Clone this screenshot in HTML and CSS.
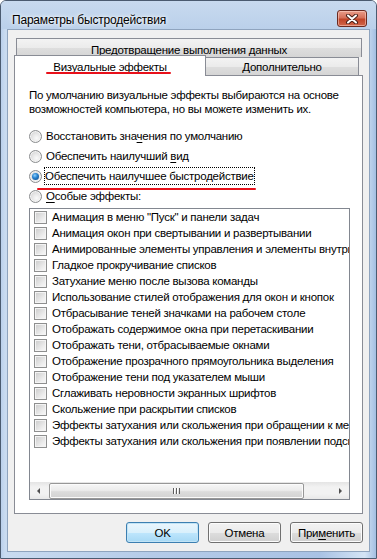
FILE: index.html
```html
<!DOCTYPE html>
<html>
<head lang="ru">
    <meta charset="UTF-8">
    <title>Параметры быстродействия</title>
    <link rel="stylesheet" href="styles.css">
</head>
<body>
<div class="window">
    <div class="titlebar">
        <span class="title">Параметры быстродействия</span>
        <span class="close">
            <svg width="16" height="10" viewBox="0 0 16 10">
                <path d="M4 1.5 L12 8.5 M12 1.5 L4 8.5" stroke="#4a1f18" stroke-width="4" stroke-linecap="round"/>
                <path d="M4 1.5 L12 8.5 M12 1.5 L4 8.5" stroke="#fff" stroke-width="2" stroke-linecap="round"/>
            </svg>
        </span>
    </div>
    <div class="client">
        <div class="tabs">
            <div class="tab-row">
                <div class="tab tab-back">Предотвращение выполнения данных</div>
            </div>
            <div class="tab-row tab-row-front">
                <div class="tab tab-active"><span class="mark">Визуальные эффекты</span></div>
                <div class="tab tab-other">Дополнительно</div>
            </div>
        </div>
        <div class="panel">
            <p class="intro">По умолчанию визуальные эффекты выбираются на основе возможностей компьютера, но вы можете изменить их.</p>
            <div class="options">
                <div class="option"><span class="radio"></span><span>Восстановить зна<u>ч</u>ения по умолчанию</span></div>
                <div class="option"><span class="radio"></span><span>Обеспечить наилучший <u>в</u>ид</span></div>
                <div class="option"><span class="radio checked"></span><span class="focus mark-line">Обеспечить наилучшее быстродействие</span></div>
                <div class="option"><span class="radio"></span><span><u>О</u>собые эффекты:</span></div>
            </div>
            <div class="list">
                <div class="list-rows">
                    <div class="item"><span class="check"></span>Анимация в меню "Пуск" и панели задач</div>
                    <div class="item"><span class="check"></span>Анимация окон при свертывании и развертывании</div>
                    <div class="item"><span class="check"></span>Анимированные элементы управления и элементы внутри окна</div>
                    <div class="item"><span class="check"></span>Гладкое прокручивание списков</div>
                    <div class="item"><span class="check"></span>Затухание меню после вызова команды</div>
                    <div class="item"><span class="check"></span>Использование стилей отображения для окон и кнопок</div>
                    <div class="item"><span class="check"></span>Отбрасывание теней значками на рабочем столе</div>
                    <div class="item"><span class="check"></span>Отображать содержимое окна при перетаскивании</div>
                    <div class="item"><span class="check"></span>Отображать тени, отбрасываемые окнами</div>
                    <div class="item"><span class="check"></span>Отображение прозрачного прямоугольника выделения</div>
                    <div class="item"><span class="check"></span>Отображение тени под указателем мыши</div>
                    <div class="item"><span class="check"></span>Сглаживать неровности экранных шрифтов</div>
                    <div class="item"><span class="check"></span>Скольжение при раскрытии списков</div>
                    <div class="item"><span class="check"></span>Эффекты затухания или скольжения при обращении к меню</div>
                    <div class="item"><span class="check"></span>Эффекты затухания или скольжения при появлении подсказок</div>
                </div>
                <div class="hscroll">
                    <span class="arrow"><i class="tri tri-left"></i></span>
                    <span class="track"><span class="thumb"><i class="grip"></i></span></span>
                    <span class="arrow"><i class="tri tri-right"></i></span>
                </div>
            </div>
        </div>
        <div class="buttons">
            <span class="btn btn-default">OK</span>
            <span class="btn">Отмена</span>
            <span class="btn">При<u>м</u>енить</span>
        </div>
    </div>
</div>
</body>
</html>
```

FILE: styles.css
```css
* {
    box-sizing: border-box;
}

body {
    margin: 0;
    background: #fff;
    font-family: "Liberation Sans", "Noto Sans", sans-serif;
    font-size: 11.5px;
    letter-spacing: -0.25px;
    line-height: 14px;
    color: #000;
}

u {
    text-decoration: underline;
    text-underline-offset: 2px;
}

.window {
    width: 377px;
    height: 559px;
    border: 1px solid #4b5b70;
    border-radius: 6px 6px 0 0;
    background: linear-gradient(90deg, #bad0ec 0, #c9dbf0 4px, #b5cbe8 40%, #a9c2e4 85%, #d4e4f5 97%, #a4bfe2 100%);
    box-shadow: inset 0 1px 0 #eef4fb;
}

.titlebar {
    display: flex;
    justify-content: space-between;
    align-items: flex-start;
    height: 28px;
    background: linear-gradient(#c8daef, #bad0ea);
    border-radius: 5px 5px 0 0;
}

.title {
    padding: 12px 0 0 11px;
    font-size: 12px;
    letter-spacing: -0.2px;
    text-shadow: 0 0 6px #fff, 0 0 3px #fff;
}

.close {
    display: flex;
    align-items: center;
    justify-content: center;
    width: 30px;
    height: 17px;
    margin: 9px 9px 0 0;
    border: 1px solid #6b2a20;
    border-radius: 3px;
    background: linear-gradient(#e99d8a, #d6705a 45%, #c04428 55%, #d2664a);
    box-shadow: inset 0 0 0 1px rgba(255, 220, 210, 0.5);
}

.client {
    margin: 0 6px;
    height: 523px;
    padding: 8px 6px 0 6px;
    border: 1px solid #8fa4be;
    background: #f0f0f0;
}

.tab-row {
    display: flex;
}

.tab {
    border: 1px solid #898c95;
    border-bottom: none;
    text-align: center;
    white-space: nowrap;
    background: linear-gradient(#f3f3f3, #ebebeb 50%, #dedede 51%, #d5d5d5);
}

.tab-back {
    width: 346px;
    height: 19px;
    margin-left: 2px;
    padding-top: 4px;
}

.tab-row-front {
    align-items: flex-end;
    height: 20px;
    margin-top: -2px;
}

.tab-active {
    position: relative;
    z-index: 1;
    width: 192px;
    height: 21px;
    margin-bottom: -1px;
    padding-top: 4px;
    background: #fff;
}

.tab-other {
    width: 154px;
    height: 18px;
    margin-left: -1px;
    padding-top: 2px;
}

.mark, .mark-line {
    position: relative;
}

.mark::after, .mark-line::after {
    content: "";
    position: absolute;
    height: 2px;
    background: #e8101a;
    border-radius: 1px;
}

.mark::after {
    left: -7px;
    right: -4px;
    bottom: -1px;
}

.mark-line::after {
    left: -8px;
    right: -2px;
    bottom: -6px;
}

.panel {
    height: 439px;
    padding: 12px 12px 0 14px;
    border: 1px solid #898c95;
    background: #fff;
}

.intro {
    margin: 0;
    width: 320px;
}

.options {
    margin-top: 10px;
}

.option {
    display: flex;
    align-items: center;
    gap: 4px;
    height: 20px;
    white-space: nowrap;
}

.radio {
    display: flex;
    align-items: center;
    justify-content: center;
    width: 13px;
    height: 13px;
    border: 1px solid #8b8d8f;
    border-radius: 50%;
    background: radial-gradient(circle at 60% 65%, #fafafa 0, #e6e6e6 45%, #c8c8c8 100%);
    box-shadow: inset 0 0 0 1px #f4f4f4;
}

.radio.checked::before {
    content: "";
    width: 7px;
    height: 7px;
    border-radius: 50%;
    background: radial-gradient(circle at 40% 35%, #8fd0ff 0, #2a86d2 40%, #0b3f7c 100%);
}

.focus {
    outline: 1px dotted #000;
    outline-offset: 0;
    padding: 1px 0;
    margin-left: -1px;
}

.list {
    width: 321px;
    height: 292px;
    margin-top: 2px;
    border: 1px solid #828790;
    overflow: hidden;
}

.list-rows {
    height: 273px;
    padding-left: 4px;
}

.item {
    display: flex;
    align-items: center;
    gap: 5px;
    height: 16px;
    white-space: nowrap;
}

.check {
    flex: none;
    width: 13px;
    height: 13px;
    border: 1px solid #8e8f8f;
    background: linear-gradient(135deg, #cbcbcb, #eeeeee 70%, #f8f8f8);
    box-shadow: inset 0 0 0 1px #f4f4f4;
}

.hscroll {
    display: flex;
    height: 17px;
    background: linear-gradient(#e4e4e4, #f2f2f2 30%, #f2f2f2 70%, #e8e8e8);
}

.arrow {
    display: flex;
    align-items: center;
    justify-content: center;
    width: 17px;
    flex: none;
}

.tri {
    width: 0;
    height: 0;
    border-top: 3px solid transparent;
    border-bottom: 3px solid transparent;
}

.tri-left {
    border-right: 3px solid #505050;
}

.tri-right {
    border-left: 3px solid #505050;
}

.track {
    flex: 1;
    display: flex;
    align-items: center;
    padding-left: 2px;
}

.thumb {
    display: flex;
    align-items: center;
    justify-content: center;
    width: 255px;
    height: 16px;
    border: 1px solid #979797;
    border-radius: 2px;
    background: linear-gradient(#f6f6f6, #ececec 45%, #dcdcdc 55%, #d2d2d2);
    box-shadow: inset 0 0 0 1px #fbfbfb;
}

.grip {
    width: 7px;
    height: 6px;
    background: repeating-linear-gradient(90deg, #5e5e5e 0 1px, #fff 1px 2px, transparent 2px 3px);
}

.buttons {
    display: flex;
    justify-content: flex-end;
    gap: 9px;
    margin-top: 8px;
}

.btn {
    display: flex;
    align-items: center;
    justify-content: center;
    width: 73px;
    height: 21px;
    border: 1px solid #707070;
    border-radius: 3px;
    background: linear-gradient(#f2f2f2, #ebebeb 50%, #dddddd 51%, #cfcfcf);
    box-shadow: inset 0 0 0 1px #fcfcfc;
}

.btn-default {
    border-color: #3c7fb1;
    background: linear-gradient(#eaf6fd, #d9f0fc 50%, #bee6fd 51%, #a7d9f5);
    box-shadow: inset 0 0 0 1px #c2e4f6;
}
```
